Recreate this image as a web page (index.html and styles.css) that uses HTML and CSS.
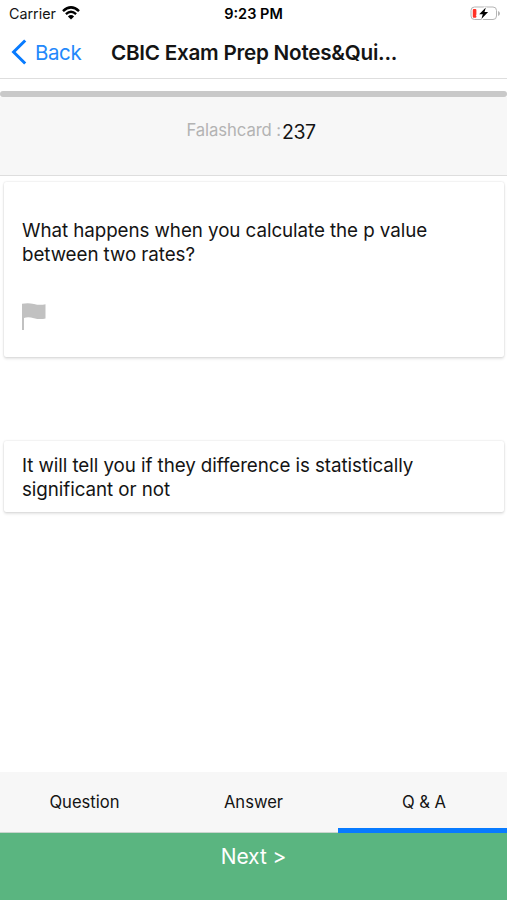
FILE: index.html
```html
<!DOCTYPE html>
<html lang="en">

<head>
  <meta charset="utf-8">
  <title>CBIC Exam Prep Notes&amp;Quizzes</title>
  <link rel="stylesheet" href="styles.css">
</head>

<body>
  <div class="status">
    <div class="carrier">
      <span>Carrier</span>
      <svg class="wifi" width="18" height="14" viewBox="0 0 18 14">
        <path d="M1 5.1Q9-2.3 17 5.1" fill="none" stroke="#000" stroke-width="2.5"/>
        <path d="M3.9 8.1Q9 3.6 14.1 8.1" fill="none" stroke="#000" stroke-width="2.4"/>
        <path d="M5.9 10.4Q9 7.8 12.1 10.4L9 13.6z"/>
      </svg>
    </div>
    <div class="time">9:23 PM</div>
    <svg class="battery" width="31" height="15" viewBox="0 0 31 15">
      <rect x="1" y="1" width="25.500" height="12.500" rx="3.500" fill="#fff" stroke="#b5b5b5"/>
      <path d="M28 5v5q2-.8 2-2.500t-2-2.500z" fill="#b5b5b5"/>
      <rect x="2.800" y="3" width="3.600" height="8.800" rx="1" fill="#ff3126"/>
      <path d="M15.800 1.500L9.200 8.300h3.600L11.400 13l6.700-6.900h-3.600z" stroke="#fff" stroke-width="3" paint-order="stroke"/>
    </svg>
  </div>

  <div class="navbar">
    <a class="back">
      <svg width="16" height="26" viewBox="0 0 16 26">
        <path d="M14.200 1.500L2.600 13l11.600 11.500" fill="none" stroke="#087bff" stroke-width="3"/>
      </svg>
      <span>Back</span>
    </a>
    <h1>CBIC Exam Prep Notes&amp;Qui...</h1>
  </div>

  <div class="progress"></div>

  <div class="counter">
    <span class="label">Falashcard :</span><span class="number">237</span>
  </div>

  <div class="card question">
    <p class="q-text">What happens when you calculate the p value<br>between two rates?</p>
    <svg class="flag" width="24" height="27" viewBox="0 0 24 27">
      <path d="M0 .8Q6-.6 12 1t11.500.2V15.500Q18 16.800 12 15.200T2 15V27H0z" fill="#c1c1c1"/>
    </svg>
  </div>

  <div class="card answer">
    <p class="a-text">It will tell you if they difference is statistically<br>significant or not</p>
  </div>

  <div class="tabs">
    <div class="tab">Question</div>
    <div class="tab">Answer</div>
    <div class="tab active">Q &amp; A</div>
  </div>

  <div class="next">Next &gt;</div>
</body>

</html>
```

FILE: styles.css
```css
* { box-sizing: border-box; }

body {
  margin: 0;
  height: 900px;
  display: flex;
  flex-direction: column;
  overflow: hidden;
  background-color: #fff;
  color: #141414;
  font-family: Inter, "Liberation Sans", sans-serif;
}

.status {
  height: 27px;
  padding: 0 6px 0 9px;
  display: grid;
  grid-template-columns: 1fr auto 1fr;
  align-items: center;
  font-size: 14.3px;
}

.carrier {
  display: flex;
  align-items: center;
  gap: 6px;
}

.wifi { margin-bottom: 2px; }

.time {
  margin-right: 3px;
  font-size: 14.5px;
  font-weight: 600;
  color: #000;
}

.battery { justify-self: end; }

.navbar {
  height: 52px;
  padding: 0 0 1px 11px;
  display: flex;
  align-items: center;
  border-bottom: 1px solid #dedede;
}

.back {
  width: 100px;
  display: flex;
  align-items: center;
  gap: 8px;
  color: #2388fb;
  font-size: 20.5px;
  letter-spacing: -.4px;
}

h1 {
  margin: 0;
  font-size: 20.7px;
  font-weight: 600;
  letter-spacing: -.26px;
  white-space: nowrap;
}

.progress {
  height: 6px;
  margin-top: 12px;
  border-radius: 3px;
  background-color: #c9c9c9;
}

.counter {
  height: 79px;
  padding: 21px 5px 0 0;
  display: flex;
  justify-content: center;
  align-items: flex-start;
  gap: 1px;
  background-color: #f7f7f7;
  border-bottom: 1px solid #dedede;
  line-height: 24px;
}

.label {
  color: #b3b3b3;
  font-size: 16.7px;
  letter-spacing: -.1px;
}

.number {
  padding-top: 2px;
  font-size: 19.5px;
  letter-spacing: -.5px;
}

.card {
  margin: 0 3px 0 4px;
  padding: 0 18px;
  border-radius: 2px;
  box-shadow: 0 0 2px rgba(0, 0, 0, .17), 0 2px 3px rgba(0, 0, 0, .1);
}

.card p {
  margin: 0;
  font-size: 18.8px;
  line-height: 23.500px;
  letter-spacing: -.07px;
  white-space: nowrap;
}

.question {
  height: 175px;
  margin-top: 6px;
  padding-top: 37px;
}

.flag {
  display: block;
  margin-top: 37px;
}

.answer {
  height: 71px;
  margin-top: 84px;
  padding-top: 13px;
}

.tabs {
  height: 61px;
  margin-top: auto;
  display: grid;
  grid-template-columns: repeat(3, 1fr);
  background-color: #f7f7f7;
  font-size: 16.6px;
}

.tab {
  display: flex;
  align-items: center;
  justify-content: center;
  border-bottom: 1px solid #c9d5ce;
}

.active {
  padding: 4px 0 0 3px;
  border-bottom: 5px solid #087bff;
}

.next {
  height: 67px;
  padding-top: 10px;
  background-color: #5ab580;
  color: #fff;
  font-size: 21px;
  line-height: 28px;
  letter-spacing: -.1px;
  text-align: center;
}
```
